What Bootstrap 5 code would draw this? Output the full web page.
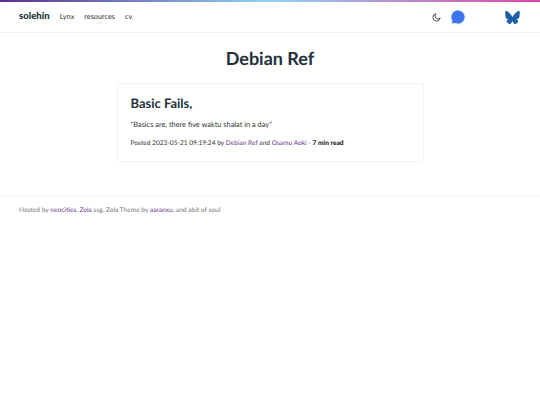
<!DOCTYPE html>
<html lang="en">
<head>
    <meta charset="UTF-8">
    <meta name="viewport" content="width=device-width, initial-scale=1.0">
    <title>solehin</title>
    <link href="https://cdn.jsdelivr.net/npm/bootstrap@5.3.0/dist/css/bootstrap.min.css" rel="stylesheet">
    <style>
        body { font-family: "Lato", "Liberation Sans", sans-serif; color: #222; font-size: 8px; background: #fff; text-rendering: geometricPrecision; }
        a { color: #6b3a8c; text-decoration: none; }
        .top-strip { height: 2px; background: linear-gradient(90deg, #5b2f8c, #8fd3f4 50%, #e044a8); }
        .site-bar { height: 31px; padding: 0 20px 0 19px; border-bottom: 1px solid #f3f3f3; }
        .brand-name { font-size: 9.6px; font-weight: 900; color: #24323a; margin-right: 10px; }
        .site-link { font-size: 7.3px; color: #333; margin-right: 10px; }
        .moon-icon { margin-right: 10px; }
        .chat-icon { filter: drop-shadow(0 0 1px #a9c6f7); margin-right: 40px; }
        .page-title { font-size: 18px; font-weight: 700; color: #22303a; margin: 14px 0 14px; line-height: 22px; }
        .post-box { width: 307px; height: 79px; border: 1px solid #f3f3f3; border-radius: 2px; padding: 11px 13px; }
        .post-title { font-size: 13px; font-weight: 700; color: #22303a; margin: 0 0 8px; line-height: 16px; }
        .post-quote { font-size: 7.4px; color: #333; margin: 0 0 8px; line-height: 11px; }
        .post-meta { font-size: 6.6px; color: #333; line-height: 10px; }
        .post-meta b { font-weight: 900; color: #222; }
        .site-foot { margin-top: 33px; border-top: 1px solid #f5f5f5; padding: 9px 19px; font-size: 6.6px; color: #777; line-height: 11px; }
    </style>
</head>
<body>
    <div class="top-strip"></div>

    <nav class="site-bar d-flex align-items-center">
        <span class="brand-name">solehin</span>
        <a class="site-link" href="#">Lynx</a>
        <a class="site-link" href="#">resources</a>
        <a class="site-link" href="#">cv</a>
        <div class="ms-auto d-flex align-items-center">
            <svg class="moon-icon" width="9" height="9" viewBox="0 0 16 16" fill="none" stroke="#333" stroke-width="1.5">
                <path d="M7 1.500a6.500 6.500 0 1 0 7.500 7.500A5.200 5.200 0 0 1 7 1.500z"/>
            </svg>
            <svg class="chat-icon" width="14" height="14" viewBox="0 0 16 16">
                <path fill="#3b74ea" d="M8 .5a7.500 7.500 0 1 1-3.400 14.200L1.200 15.500l.6-3.400A7.500 7.500 0 0 1 8 .5z"/>
            </svg>
            <svg width="15" height="13" viewBox="0 0 64 57">
                <path fill="#1a5fa8" d="M14 4c7.300 5.500 15.200 16.700 18 22.700C34.800 20.700 42.700 9.500 50 4c5.300-4 14-7.100 14 2.800 0 2-1.100 16.600-1.800 19-2.300 8.300-10.800 10.400-18.300 9.100 13.100 2.200 16.500 9.600 9.300 17-13.700 14-19.700-3.500-21.200-8-.3-.8-.4-1.200-.4-.9 0-.3-.1.1-.4.900-1.500 4.500-7.500 22-21.200 8-7.200-7.400-3.800-14.800 9.300-17-7.500 1.300-16-.8-18.300-9.100C1.100 23.400 0 8.800 0 6.800 0-3.100 8.700 0 14 4z"/>
            </svg>
        </div>
    </nav>

    <main class="d-flex flex-column align-items-center">
        <h1 class="page-title">Debian Ref</h1>
        <div class="post-box">
            <h2 class="post-title">Basic Fails,</h2>
            <p class="post-quote">"Basics are, there five waktu shalat in a day"</p>
            <div class="post-meta">Posted 2023-05-21 09:19:24 by <a href="#">Debian Ref</a> and <a href="#">Osamu Aoki</a> - <b>7 min read</b></div>
        </div>
    </main>

    <footer class="site-foot">
        Hosted by <a href="#">neocities</a>, <a href="#">Zola</a> ssg, Zola Theme by <a href="#">aaranxu</a>, and abit of soul
    </footer>

    <script src="https://cdn.jsdelivr.net/npm/bootstrap@5.3.0/dist/js/bootstrap.bundle.min.js"></script>
</body>
</html>
